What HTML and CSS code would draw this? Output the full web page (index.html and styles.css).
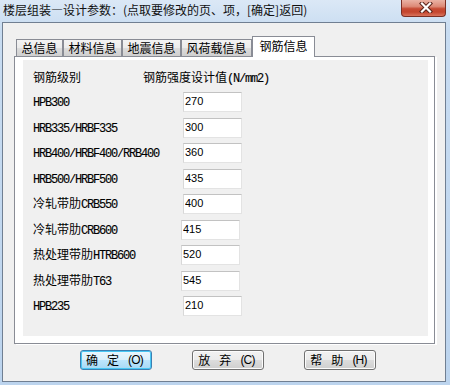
FILE: index.html
```html
<!DOCTYPE html>
<html lang="zh-CN">
<head>
<meta charset="utf-8">
<title>楼层组装—设计参数</title>
<link rel="stylesheet" href="styles.css">
</head>
<body>
<div class="window">
  <div class="titlebar">
    <span class="title">楼层组装—设计参数：(点取要修改的页、项，[确定]返回)</span>
    <div class="close">
      <svg width="14" height="11" viewBox="0 0 14 11">
        <path d="M3 1.5 L11 9.5 M11 1.5 L3 9.5" stroke="#5a241b" stroke-width="4.2" stroke-linecap="square" fill="none"/>
        <path d="M3 1.5 L11 9.5 M11 1.5 L3 9.5" stroke="#ffffff" stroke-width="2.2" stroke-linecap="square" fill="none"/>
      </svg>
    </div>
  </div>
  <div class="client">
    <div class="tabs">
      <div class="tab">总信息</div>
      <div class="tab">材料信息</div>
      <div class="tab">地震信息</div>
      <div class="tab">风荷载信息</div>
      <div class="tab active">钢筋信息</div>
    </div>
    <div class="panel">
      <div class="group">
        <div class="head">
          <span class="head-grade">钢筋级别</span>
          <span>钢筋强度设计值<span class="en">(N/mm2)</span></span>
        </div>
        <div class="rows">
          <div class="row"><span class="lbl"><span class="en">HPB300</span></span><input class="val" value="270"></div>
          <div class="row"><span class="lbl"><span class="en">HRB335/HRBF335</span></span><input class="val" value="300"></div>
          <div class="row"><span class="lbl"><span class="en">HRB400/HRBF400/RRB400</span></span><input class="val" value="360"></div>
          <div class="row"><span class="lbl"><span class="en">HRB500/HRBF500</span></span><input class="val" value="435"></div>
          <div class="row"><span class="lbl">冷轧带肋<span class="en">CRB550</span></span><input class="val" value="400"></div>
          <div class="row"><span class="lbl shift">冷轧带肋<span class="en">CRB600</span></span><input class="val" value="415"></div>
          <div class="row"><span class="lbl shift">热处理带肋<span class="en">HTRB600</span></span><input class="val" value="520"></div>
          <div class="row"><span class="lbl shift">热处理带肋<span class="en">T63</span></span><input class="val" value="545"></div>
          <div class="row"><span class="lbl"><span class="en">HPB235</span></span><input class="val" value="210"></div>
        </div>
      </div>
    </div>
    <div class="buttons">
      <div class="btn default"><span>确</span><span>定</span><span class="key">(O)</span></div>
      <div class="btn"><span>放</span><span>弃</span><span class="key">(C)</span></div>
      <div class="btn"><span>帮</span><span>助</span><span class="key">(H)</span></div>
    </div>
  </div>
</div>
</body>
</html>
```
FILE: styles.css
```css
* { box-sizing: border-box; }
html, body { margin: 0; padding: 0; }
body {
  width: 450px;
  height: 385px;
  overflow: hidden;
  font-family: "Noto Sans CJK SC", "Liberation Sans", sans-serif;
  font-size: 12px;
  color: #000;
}
.window {
  width: 450px;
  height: 385px;
  background: linear-gradient(#dbe8f6, #c8dcf1 30px, #bcd4ee);
  display: flex;
  flex-direction: column;
}
.titlebar {
  height: 22px;
  display: flex;
  align-items: flex-start;
  padding: 0 4px 0 3px;
}
.title {
  line-height: 20px;
  color: #111;
  white-space: nowrap;
}
.close {
  margin-left: auto;
  width: 45px;
  height: 17px;
  border: 1px solid #7b2f24;
  border-top: none;
  border-radius: 0 0 4px 4px;
  background: linear-gradient(#eab2a4 0%, #dd8a77 40%, #c64a33 55%, #c4452e 75%, #d9735c 100%);
  display: flex;
  align-items: center;
  justify-content: center;
  padding: 0 0 2px 4px;
}
.close svg { display: block; }
.client {
  margin: 0 4px 3px 2px;
  height: 360px;
  border: 1px solid #707f92;
  background: #f0f0f0;
}
.tabs {
  margin: 13px 0 0 13px;
  height: 20px;
  display: flex;
  align-items: flex-end;
}
.tab {
  height: 17px;
  padding: 0 4.5px;
  border: 1px solid #898c95;
  border-bottom: none;
  background: linear-gradient(#f3f3f3, #ebebeb 50%, #dddddd 50%, #cfcfcf);
  line-height: 16px;
  white-space: nowrap;
  color: #000;
}
.tab.active {
  position: relative;
  z-index: 1;
  height: 21px;
  margin-bottom: -1px;
  padding: 0 6.5px;
  background: #ffffff;
  line-height: 17px;
}
.panel {
  margin: 0 10px 0 11px;
  height: 288px;
  border: 1px solid #898c95;
  background: #ffffff;
  box-shadow: 2px 1px 0 #ffffff;
  padding: 3px 6px 7px 8px;
}
.group {
  height: 276px;
  background: #f0f0f0;
  padding: 7px 0 0 10px;
}
.head {
  height: 20px;
  line-height: 20px;
  display: flex;
}
.head-grade { width: 110px; }
.en {
  font-family: "Liberation Mono", monospace;
  font-size: 12px;
  letter-spacing: -1.2px;
  -webkit-text-stroke: 0.12px #000;
}
.rows {
  margin-top: 5px;
  display: flex;
  flex-direction: column;
  gap: 5.5px;
}
.row {
  height: 20px;
  display: flex;
  align-items: center;
}
.lbl {
  width: 150px;
  white-space: nowrap;
  line-height: 20px;
}
.lbl.shift { width: 148px; }
.val {
  width: 59px;
  height: 20px;
  margin: 0;
  padding: 0 0 2px 1px;
  border: 1px solid #e3e3e3;
  border-top-color: #c2c2c2;
  border-left-color: #d8d8d8;
  border-radius: 0;
  background: #ffffff;
  font-family: "Liberation Sans", sans-serif;
  font-size: 11px;
  color: #000;
  outline: none;
}
.buttons {
  margin-top: 6px;
  padding-left: 77px;
  display: flex;
  gap: 40px;
}
.btn {
  width: 72px;
  height: 20px;
  border: 1px solid #707070;
  border-radius: 3px;
  background: linear-gradient(#f2f2f2, #ebebeb 50%, #dddddd 50%, #cfcfcf);
  box-shadow: inset 0 0 0 1px #fcfcfc;
  display: flex;
  align-items: center;
  justify-content: center;
  gap: 9px;
  padding-right: 3px;
  line-height: 16px;
}
.btn.default {
  border-color: #3c7fb1;
  background: linear-gradient(#eaf6fd, #d9f0fc 50%, #bee6fd 50%, #a7d9f5);
  box-shadow: inset 0 0 0 1px #48c7f4;
}
.key {
  font-family: "Liberation Sans", sans-serif;
  font-size: 12px;
  letter-spacing: -0.8px;
}
```
